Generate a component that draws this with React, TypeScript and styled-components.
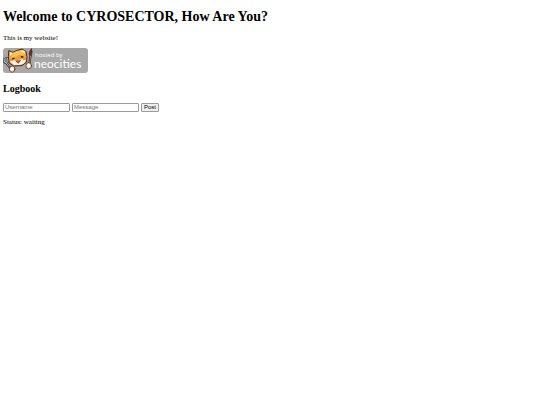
import React from "react";
import styled, { createGlobalStyle } from "styled-components";

const GlobalStyle = createGlobalStyle`
  body {
    margin: 0;
    background: #fff;
    color: #000;
    font: 7px/8px "Liberation Serif", "Times New Roman", serif;
  }
`;

const Page = styled.main`
  display: flex;
  flex-direction: column;
  align-items: flex-start;
  padding: 9px 3px;
`;

const Title = styled.h1`
  margin: 0 0 9px;
  font-size: 14px;
  line-height: 16px;
`;

const Heading = styled.h2`
  margin: 10px 0 8px;
  font-size: 10px;
  line-height: 12px;
`;

const Text = styled.p`
  margin: 0;
`;

const BadgeLink = styled.a`
  display: block;
  margin-top: 6px;
`;

const Badge = styled.svg`
  display: block;
  width: 85px;
  height: 25px;
`;

const Form = styled.form`
  display: flex;
  gap: 2px;
  margin-bottom: 6px;
`;

const Field = styled.input`
  box-sizing: border-box;
  width: 67px;
  height: 9px;
  margin: 0;
  padding: 0 1px 1px;
  border: 1px solid #9a9a9a;
  border-radius: 1px;
  background: #fff;
  font: 6px/6px "Liberation Sans", Arial, sans-serif;

  &::placeholder {
    color: #757575;
  }
`;

const PostButton = styled.button`
  box-sizing: border-box;
  width: 18px;
  height: 9px;
  margin: 0;
  padding: 0;
  border: 1px solid #9a9a9a;
  border-radius: 1px;
  background: #efefef;
  color: #000;
  font: 6px/7px "Liberation Sans", Arial, sans-serif;
`;

function NeocitiesBadge() {
  return (
    <Badge viewBox="0 0 85 25" role="img" aria-label="Hosted by Neocities">
      <rect width="85" height="25" rx="3" fill="#a8a8a8" />
      <g strokeLinejoin="round" strokeLinecap="round">
        <path
          d="M6 14.5 5.4 8.5 5.8 2.6 10 4.4 14 2.4 19 1 23 3.4 24 8.5 23.6 14 19 17.6 11 18Z"
          fill="#f0a03a"
          stroke="#3d2a20"
          strokeWidth="1"
        />
        <path d="M6.8 3.9 10.2 5 7 8ZM16.5 2.6 21.6 2.4 22.2 6Z" fill="#ffe9b8" />
        <path d="M10 4.8 14.5 2.8 19 3.8 21.5 7.5 17 6.5 13 8.5 8 9.5Z" fill="#f7c452" />
        <path
          d="M7 13.5Q10 11.4 13 13.2L17 11.8Q21 10 23 12L21 15.6 16.5 17 11 17Z"
          fill="#fff0dc"
        />
        <path d="M9.6 10.8 11 10.4M18.4 8.8 19.8 9" stroke="#2b1d18" strokeWidth="1.4" />
        <path d="M13.2 13.4 15.3 15.2 17.3 12.8Z" fill="#c84f3b" stroke="#58291d" strokeWidth=".6" />
        <path d="m7.4 12 1.8.3m11.3-.7 1.6-.4" stroke="#e97843" strokeWidth="1" />
        <path d="m3.4 15.3 4.8 6" stroke="#373a42" strokeWidth="2.2" />
        <path d="M.9 10.5 1.3 14.4 3.4 15.6 5.3 13.7 4.4 9.9M2.7 10.2 3.2 14.7" fill="none" stroke="#343740" strokeWidth="1.7" />
        <path d="M1 10.6 1.5 14.1 3.4 15.1 5 13.5 4.4 10.1M2.7 10.4 3.3 15 6 18.4" fill="none" stroke="#e5e8eb" strokeWidth=".7" />
        <path d="M27.6 7.5 26 18" stroke="#442c25" strokeWidth="2.2" />
        <path d="M27.6 8 26.1 17.5" stroke="#bc7545" strokeWidth="1" />
        <path d="M28.4 1Q25.8 3.5 26.2 6.7L28.4 7.1Q30 4 28.4 1Z" fill="#8a2529" stroke="#442329" strokeWidth=".8" />
        <ellipse cx="9.2" cy="21.1" rx="2.8" ry="3" fill="#fffaf1" stroke="#58351f" strokeWidth=".9" />
        <ellipse cx="25.7" cy="17.8" rx="2.8" ry="3.1" fill="#fffaf1" stroke="#58351f" strokeWidth=".9" />
        <path d="M7.3 23Q9.2 24.3 11 22.7M24.2 20Q25.8 21 27.5 19.4" fill="none" stroke="#e59b4e" strokeWidth=".8" />
      </g>
      <g fill="#fff">
        <text x="32" y="9" fontSize="6" fontFamily='"Open Sans", sans-serif'>hosted by</text>
        <text x="31" y="20" fontSize="12" fontFamily="Lato, sans-serif">neocities</text>
      </g>
    </Badge>
  );
}

export default function App() {
  return (
    <>
      <GlobalStyle />
      <Page>
        <Title>Welcome to CYROSECTOR, How Are You?</Title>
        <Text>This is my website!</Text>
        <BadgeLink href="#neocities">
          <NeocitiesBadge />
        </BadgeLink>
        <Heading>Logbook</Heading>
        <Form onSubmit={(event: React.FormEvent) => event.preventDefault()}>
          <Field type="text" placeholder="Username" aria-label="Username" />
          <Field type="text" placeholder="Message" aria-label="Message" />
          <PostButton type="submit">Post</PostButton>
        </Form>
        <Text role="status">Status: waiting</Text>
      </Page>
    </>
  );
}
